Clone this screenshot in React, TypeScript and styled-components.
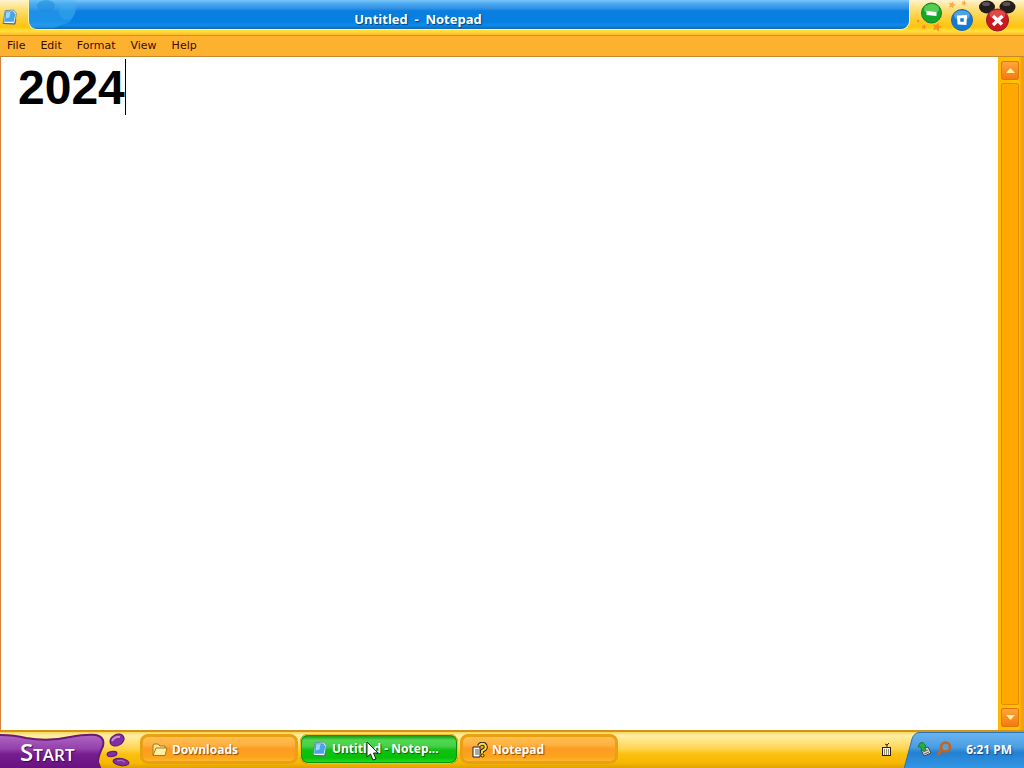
import React, { useState } from "react";
import styled, { createGlobalStyle, css } from "styled-components";

const GlobalStyle = createGlobalStyle`
  * { box-sizing: border-box; }
  html, body, #root { height: 100%; margin: 0; }
  body { overflow: hidden; background: #fff; font-family: "DejaVu Sans", sans-serif; font-size: 11px; }
  button { font: inherit; margin: 0; padding: 0; border: 0; background: none; cursor: default; }
  svg { display: block; flex: none; }
`;

const Desktop = styled.div`
  display: flex;
  flex-direction: column;
  height: 100vh;
`;

const Window = styled.main`
  flex: 1;
  min-height: 0;
  display: flex;
  flex-direction: column;
`;

const TitleBar = styled.header`
  display: flex;
  align-items: flex-start;
  height: 36px;
  border-bottom: 1px solid #d8921c;
  background: linear-gradient(#fff3d0 0, #fde48c 7px, #fcd040 17px, #fdc50e 27px, #ffe23c 31px, #fdb92c 35px);
`;

const AppIcon = styled.div`
  width: 28px;
  padding: 9px 0 0 2px;
`;

const Caption = styled.h1`
  flex: 1;
  height: 30px;
  margin: 0;
  padding: 8px 102px 0 0;
  position: relative;
  overflow: hidden;
  display: flex;
  align-items: center;
  justify-content: center;
  border: solid #f8f4b4;
  border-width: 0 1px 1px 1px;
  border-radius: 0 0 9px 9px;
  background: linear-gradient(#7ac6fa 0, #49a6ee 4px, #3494e6 8px, #0a7ee0 11px, #0580e2 22px, #0c8cee 25px, #1668ac 29px);
  color: #fff;
  font: bold 13px/20px "Open Sans", sans-serif;
  white-space: pre;
  text-shadow: 1px 1px 1px #003d80;
`;

const Bubbles = styled.svg`
  position: absolute;
  left: 0;
  top: 0;
`;

const Controls = styled.div`
  width: 114px;
  height: 35px;
  position: relative;
`;

const Sparkles = styled.svg`
  position: absolute;
  inset: 0;
`;

const ControlButton = styled.button<{ $x: number; $y: number }>`
  position: absolute;
  left: ${(p) => p.$x}px;
  top: ${(p) => p.$y}px;
`;

const MenuBar = styled.nav`
  display: flex;
  height: 21px;
  padding-left: 2px;
  background: #fdb22f;
  border-bottom: 1px solid #c48a28;
`;

const MenuItem = styled.button`
  padding: 0 5px;
  margin-right: 5px;
  line-height: 18px;
  color: #3c0a00;
`;

const Body = styled.div`
  flex: 1;
  min-height: 0;
  display: flex;
  border-left: 1px solid #d9813a;
`;

const Editor = styled.div`
  flex: 1;
  position: relative;
  display: flex;
`;

const Text = styled.textarea`
  flex: 1;
  border: 0;
  outline: 0;
  resize: none;
  overflow: hidden;
  padding: 3px 17px;
  background: #fff;
  color: #000;
  font: bold 48px/56px "Liberation Sans", Arial, sans-serif;
`;

const Caret = styled.span`
  position: absolute;
  left: 124px;
  top: 2px;
  width: 1px;
  height: 56px;
  background: #000;
`;

const ScrollBar = styled.div`
  width: 26px;
  padding: 4px 5px 3px 3px;
  display: flex;
  flex-direction: column;
  gap: 3px;
  background: linear-gradient(90deg, #ffb800, #ffc400 20px, #ffb400 22px, #f0a010 24px);
`;

const ScrollButton = styled.button`
  height: 19px;
  display: flex;
  align-items: center;
  justify-content: center;
  border: 1px solid #e07808;
  border-radius: 2px;
  background: linear-gradient(#ffa43c, #f47a10);
`;

const Thumb = styled.div`
  flex: 1;
  border: 1px solid #e88a00;
  border-radius: 2px;
  background: #ffa800;
`;

const TaskBar = styled.footer`
  display: flex;
  height: 38px;
  border-top: 2px solid #d29416;
  background: linear-gradient(#fcd050 0, #fff0a8 3px, #ffe27c 10px, #ffd34c 17px, #fbc010 22px, #f6b800 31px, #e0a000 36px);
`;

const StartButton = styled.button`
  width: 138px;
  height: 36px;
  position: relative;
`;

const StartLabel = styled.span`
  position: absolute;
  left: 20px;
  top: 8px;
  color: #fff;
  font: 600 24px/24px "Open Sans", sans-serif;
  font-variant: small-caps;
  text-shadow: 1px 1px 1px #3a0a4c;
`;

const Tasks = styled.div`
  flex: 1;
  display: flex;
  gap: 2px;
  padding: 2px 0 0 2px;
`;

const Task = styled.button<{ $active?: boolean }>`
  width: 158px;
  height: 30px;
  padding: 2px 10px 0 9px;
  display: flex;
  align-items: center;
  gap: 4px;
  border: 3px solid #e9a012;
  border-radius: 8px;
  color: #fff;
  font: bold 12px/18px "Noto Sans", sans-serif;
  white-space: pre;
  text-shadow: 1px 1px 1px #8a4a00;
  background: linear-gradient(#ffc050 0, #ffb040 8px, #fc9c20 12px, #fca41c 20px, #ffb82c 24px);
  ${(p) =>
    p.$active &&
    css`
      border: 2px solid #109010;
      outline: 1px solid #f4c020;
      outline-offset: -1px;
      padding: 2px 10px;
      text-shadow: 1px 1px 1px #066a06;
      background: linear-gradient(#189a18 0, #50d850 4px, #48d048 10px, #10c010 14px, #08c008 22px, #20e020 26px);
    `}
`;

const Language = styled.div`
  padding-top: 10px;
`;

const Tray = styled.div`
  width: 132px;
  height: 36px;
  position: relative;
  display: flex;
  align-items: center;
`;

const TrayShape = styled.svg`
  position: absolute;
  inset: 0;
`;

const TrayContent = styled.div`
  position: relative;
  display: flex;
  align-items: center;
  flex: 1;
  padding: 0 12px 2px 25px;
  gap: 4px;
`;

const Clock = styled.time`
  margin-left: auto;
  padding-top: 2px;
  color: #fff;
  font: bold 12px/18px "Noto Sans", sans-serif;
  white-space: nowrap;
  text-shadow: 1px 1px 1px #0a4a90;
`;

const Pointer = styled.svg`
  position: fixed;
  left: 366px;
  bottom: 6px;
`;

const NoteIcon = ({ size = 15 }: { size?: number }) => (
  <svg width={size} height={size} viewBox="0 0 15 15" aria-hidden="true">
    <path d="M3 1.500L11 1L13.500 4L12 14L1 13.500Z" fill="#e8f6ff" stroke="#5f7f98" strokeWidth="0.800" />
    <path d="M3 2L10.500 2L12.500 5L11 12L2 12Z" fill="#4aa4e4" />
    <path d="M4 3L8 3L7 8L3.500 9Z" fill="#9ad8fa" />
    <path d="M1 13.500L12 14L13 10" fill="none" stroke="#566c80" />
  </svg>
);

const star = (x: number, y: number, r: number) => {
  const pts = Array.from({ length: 10 }, (_, i) => {
    const a = (i * Math.PI) / 5 - 1.3;
    const q = i % 2 ? r * 0.45 : r;
    return `${x + q * Math.cos(a)},${y + q * Math.sin(a)}`;
  });
  return pts.join(" ");
};

export default function App() {
  const [text, setText] = useState("2024");
  return (
    <Desktop>
      <GlobalStyle />
      <Window>
        <TitleBar>
          <AppIcon><NoteIcon size={16} /></AppIcon>
          <Caption>
            <Bubbles width="60" height="28" aria-hidden="true">
              <path d="M0 0H46Q50 10 44 16Q42 24 32 25Q24 30 14 28H0Z" fill="#49b5f4" opacity="0.350" />
              <ellipse cx="17" cy="6" rx="9" ry="6" fill="#1689dc" opacity="0.500" />
              <circle cx="38" cy="12" r="8" fill="#40b4f0" opacity="0.300" />
            </Bubbles>
            Untitled  -  Notepad
          </Caption>
          <Controls>
            <Sparkles width="114" height="35" aria-hidden="true">
              <g fill="#f98f20">
                <polygon points={star(27, 27, 5)} />
                <polygon points={star(14, 27, 3)} />
                <polygon points={star(8, 21, 2)} />
                <polygon points={star(42, 5, 4)} opacity="0.700" />
                <polygon points={star(54, 3, 3)} opacity="0.700" />
              </g>
            </Sparkles>
            <ControlButton $x={10} $y={2} aria-label="Minimize">
              <svg width="23" height="23">
                <circle cx="11.500" cy="11" r="10" fill="#13a82a" stroke="#108028" />
                <ellipse cx="11.500" cy="7" rx="7.500" ry="5" fill="#74dc64" opacity="0.700" />
                <path d="M6.500 9L16.500 10V14L6.500 13Z" fill="#fff" />
              </svg>
            </ControlButton>
            <ControlButton $x={40} $y={8} aria-label="Restore">
              <svg width="24" height="24">
                <circle cx="12" cy="12" r="10.500" fill="#1479d2" stroke="#2467a4" />
                <ellipse cx="12" cy="7.500" rx="8" ry="5" fill="#79bdf2" opacity="0.600" />
                <path d="M8.500 9L15.500 8.500L15 15.500L9 15Z" fill="#1479d2" stroke="#fff" strokeWidth="3" />
              </svg>
            </ControlButton>
            <ControlButton $x={68} $y={0} aria-label="Close">
              <svg width="40" height="33">
                <ellipse cx="9" cy="7" rx="8" ry="6.500" fill="#241c1c" />
                <ellipse cx="29.500" cy="7" rx="8" ry="6.500" fill="#241c1c" />
                <ellipse cx="8" cy="4" rx="4" ry="2" fill="#5b5450" />
                <ellipse cx="28.500" cy="4" rx="4" ry="2" fill="#5b5450" />
                <circle cx="19.500" cy="20" r="11" fill="#cc1822" stroke="#8f2020" />
                <ellipse cx="19.500" cy="14.500" rx="8" ry="4.500" fill="#e86c66" opacity="0.600" />
                <path d="M15 16L24 24.500M24.500 16L15 25" stroke="#fff" strokeWidth="3.500" />
              </svg>
            </ControlButton>
          </Controls>
        </TitleBar>
        <MenuBar>
          {["File", "Edit", "Format", "View", "Help"].map((m) => <MenuItem key={m}>{m}</MenuItem>)}
        </MenuBar>
        <Body>
          <Editor>
            <Text aria-label="Document" spellCheck={false} value={text} onChange={(e) => setText(e.target.value)} />
            <Caret />
          </Editor>
          <ScrollBar>
            <ScrollButton aria-label="Scroll up"><svg width="9" height="5"><path d="M0 5L4.500 0L9 5Z" fill="#fff3a0" /></svg></ScrollButton>
            <Thumb />
            <ScrollButton aria-label="Scroll down"><svg width="9" height="5"><path d="M0 0H9L4.500 5Z" fill="#fff3a0" /></svg></ScrollButton>
          </ScrollBar>
        </Body>
      </Window>
      <TaskBar>
        <StartButton>
          <svg width="138" height="36" aria-hidden="true">
            <defs>
              <linearGradient id="plum" x1="0" y1="0" x2="0" y2="1">
                <stop offset="0" stopColor="#b066c4" />
                <stop offset="0.400" stopColor="#9440ac" />
                <stop offset="0.550" stopColor="#761d90" />
                <stop offset="1" stopColor="#68107e" />
              </linearGradient>
            </defs>
            <path d="M-2 3Q14 3 26 6Q48 10 70 5Q86 2 96 3Q105 5 103 14Q98 24 98 30L101 38H-2Z" fill="url(#plum)" stroke="#651a78" strokeWidth="2" />
            <g fill="#8030a0" stroke="#5c1670">
              <ellipse cx="117" cy="8" rx="7.500" ry="5.500" transform="rotate(-28 117 8)" />
              <ellipse cx="112" cy="22" rx="5" ry="2.500" transform="rotate(-8 112 22)" />
              <ellipse cx="121" cy="30" rx="8" ry="3.500" transform="rotate(8 121 30)" />
            </g>
            <path d="M112 9Q115 4 120 5" stroke="#c890d4" strokeWidth="2" fill="none" />
            <path d="M117 29Q121 27 125 30" stroke="#b878c8" fill="none" />
          </svg>
          <StartLabel>Start</StartLabel>
        </StartButton>
        <Tasks>
          <Task>
            <svg width="16" height="14" viewBox="0 0 16 14"><path d="M1 12V2L2 1H6L8 3H13V5" fill="#ffe88c" stroke="#a87820" /><path d="M1 12.500L4 5H15L13 12.500Z" fill="#fff0a0" stroke="#a87820" /></svg>
            Downloads
          </Task>
          <Task $active><NoteIcon size={16} />Untitled - Notep...</Task>
          <Task>
            <svg width="16" height="16"><path d="M7 4Q8 1 12 2Q15 4 13 7L10 9V11" fill="none" stroke="#222" strokeWidth="4" /><path d="M1 5H8V15H1Z" fill="#fff" stroke="#222" /><path d="M3 8H7M3 10H7M3 12H7" stroke="#555" /><path d="M7 4Q8 1 12 2Q15 4 13 7L10 9V11" fill="none" stroke="#ffe020" strokeWidth="2" /><circle cx="10.500" cy="13.500" r="1.500" fill="#ffe020" stroke="#222" /></svg>
            Notepad
          </Task>
        </Tasks>
        <Language>
          <svg width="11" height="14" aria-hidden="true"><path d="M6 5V3L4 2M6 3L8 1" stroke="#222" fill="none" /><rect x="1.500" y="5.500" width="8" height="8" fill="#fff3d0" stroke="#222" /><path d="M3 8H8M3 10H8M3 12H8" stroke="#222" strokeDasharray="1 1" /></svg>
        </Language>
        <Tray>
          <TrayShape width="132" height="36" aria-hidden="true">
            <defs><linearGradient id="sky" x1="0" y1="0" x2="0" y2="1"><stop offset="0" stopColor="#6bb4f0" /><stop offset="0.400" stopColor="#4a9ee4" /><stop offset="0.550" stopColor="#2480d0" /><stop offset="1" stopColor="#3498e6" /></linearGradient></defs>
            <path d="M12 37L20 7Q22 1 27 0.500H134V37Z" fill="url(#sky)" stroke="#2a74b4" />
          </TrayShape>
          <TrayContent>
            <svg width="15" height="15"><path d="M4 8L11 5L14 11L7 14Z" fill="#ddd" stroke="#444" /><path d="M6 10L11 8M7 12L12 10" stroke="#666" /><path d="M1 5L3 1L6 0.500L9 4L7.500 5L9 8L5 9L4 5Z" fill="#28b038" stroke="#126820" strokeWidth="0.700" /></svg>
            <svg width="16" height="16"><circle cx="9.500" cy="6" r="4.500" fill="#5a9edc" stroke="#d06010" strokeWidth="2.500" /><path d="M6 9.500L1.500 14" stroke="#d06010" strokeWidth="3" /></svg>
            <Clock>6:21 PM</Clock>
          </TrayContent>
        </Tray>
      </TaskBar>
      <Pointer width="14" height="21" aria-hidden="true"><path d="M1 1V16L4.500 13L7 19L10 18L7.500 12H12Z" fill="#fff" stroke="#222" /></Pointer>
    </Desktop>
  );
}
